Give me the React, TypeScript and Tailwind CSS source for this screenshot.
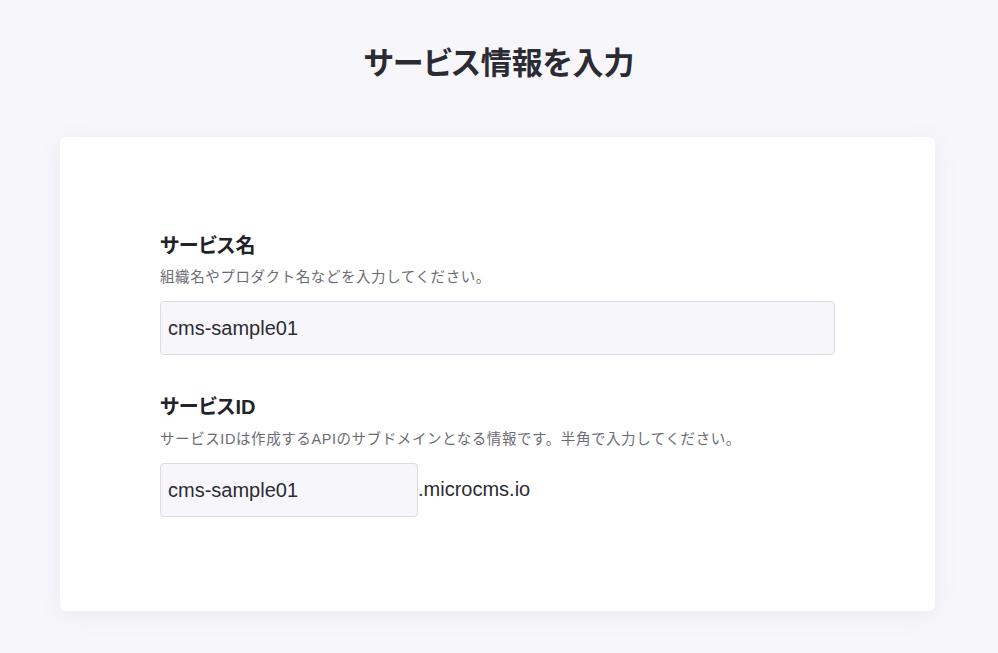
import React from 'react';

const font = '"Liberation Sans", "Noto Sans CJK JP", sans-serif';

export default function App() {
  return (
    <div className="min-h-screen bg-[#f7f7fb] pt-[40px] pb-[42px]" style={{ fontFamily: font }}>
      <h1 className="text-center text-[31px] leading-[48px] font-bold text-[#2b2b33] [font-feature-settings:'palt']">
        サービス情報を入力
      </h1>

      <div className="ml-[60px] mt-[49px] w-[875px] rounded-[6px] bg-white px-[100px] pt-[94px] pb-[94px] shadow-[0_4px_24px_rgba(60,60,110,0.08)]">
        <section>
          <h2 className="text-[20px] leading-[30px] font-bold text-[#222228] [font-feature-settings:'palt']">
            サービス名
          </h2>
          <p className="mt-[5px] text-[14.5px] leading-[22px] tracking-[0.04em] text-[#6b6b73]">
            組織名やプロダクト名などを入力してください。
          </p>
          <input
            defaultValue="cms-sample01"
            className="mt-[13px] block h-[54px] w-full rounded-[4px] border border-[#dcdce2] bg-[#f7f7fb] px-[7px] text-[20px] text-[#2b2b33] outline-none"
          />
        </section>

        <section className="mt-[37px]">
          <h2 className="text-[20px] leading-[30px] font-bold text-[#222228] [font-feature-settings:'palt']">
            サービスID
          </h2>
          <p className="mt-[6px] text-[14.5px] leading-[22px] tracking-[0.04em] text-[#6b6b73]">
            サービスIDは作成するAPIのサブドメインとなる情報です。半角で入力してください。
          </p>
          <div className="mt-[13px] flex items-center">
            <input
              defaultValue="cms-sample01"
              className="block h-[54px] w-[258px] rounded-[4px] border border-[#dcdce2] bg-[#f7f7fb] px-[7px] text-[20px] text-[#2b2b33] outline-none"
            />
            <span className="-mt-[3px] text-[20px] text-[#2b2b33]">.microcms.io</span>
          </div>
        </section>
      </div>
    </div>
  );
}
